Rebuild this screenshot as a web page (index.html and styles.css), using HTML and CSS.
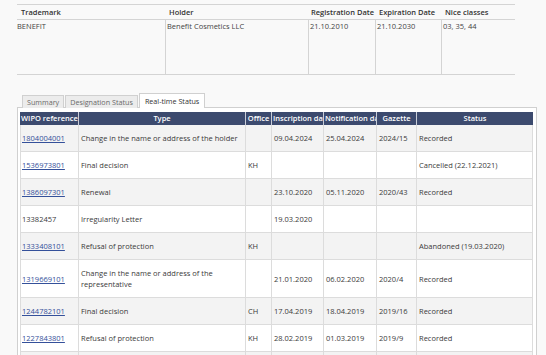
FILE: index.html
```html
<!DOCTYPE html>
<html>
<head>
<meta charset="utf-8">
<link rel="stylesheet" href="styles.css">
</head>
<body>
<table class="info">
  <colgroup><col class="c1"><col class="c2"><col class="c3"><col class="c4"><col class="c5"></colgroup>
  <thead>
    <tr><th>Trademark</th><th>Holder</th><th>Registration Date</th><th>Expiration Date</th><th>Nice classes</th></tr>
  </thead>
  <tbody>
    <tr><td>BENEFIT</td><td>Benefit Cosmetics LLC</td><td>21.10.2010</td><td>21.10.2030</td><td>03, 35, 44</td></tr>
  </tbody>
</table>

<div class="tabs">
  <div class="tab">Summary</div>
  <div class="tab">Designation Status</div>
  <div class="tab active">Real-time Status</div>
</div>
<div class="panel">
  <table class="status">
    <colgroup>
      <col class="w1"><col class="w2"><col class="w3"><col class="w4"><col class="w5"><col class="w6"><col class="w7">
    </colgroup>
    <thead>
      <tr><th>WIPO reference</th><th>Type</th><th>Office</th><th>Inscription date</th><th>Notification date</th><th>Gazette</th><th>Status</th></tr>
    </thead>
    <tbody>
      <tr class="odd"><td><a href="#">1804004001</a></td><td>Change in the name or address of the holder</td><td></td><td>09.04.2024</td><td>25.04.2024</td><td>2024/15</td><td>Recorded</td></tr>
      <tr><td><a href="#">1536973801</a></td><td>Final decision</td><td>KH</td><td></td><td></td><td></td><td>Cancelled (22.12.2021)</td></tr>
      <tr class="odd"><td><a href="#">1386097301</a></td><td>Renewal</td><td></td><td>23.10.2020</td><td>05.11.2020</td><td>2020/43</td><td>Recorded</td></tr>
      <tr><td>13382457</td><td>Irregularity Letter</td><td></td><td>19.03.2020</td><td></td><td></td><td></td></tr>
      <tr class="odd"><td><a href="#">1333408101</a></td><td>Refusal of protection</td><td>KH</td><td></td><td></td><td></td><td>Abandoned (19.03.2020)</td></tr>
      <tr><td><a href="#">1319669101</a></td><td>Change in the name or address of the representative</td><td></td><td>21.01.2020</td><td>06.02.2020</td><td>2020/4</td><td>Recorded</td></tr>
      <tr class="odd"><td><a href="#">1244782101</a></td><td>Final decision</td><td>CH</td><td>17.04.2019</td><td>18.04.2019</td><td>2019/16</td><td>Recorded</td></tr>
      <tr><td><a href="#">1227843801</a></td><td>Refusal of protection</td><td>KH</td><td>28.02.2019</td><td>01.03.2019</td><td>2019/9</td><td>Recorded</td></tr>
      <tr class="odd"><td><a href="#">1200000001</a></td><td>Final decision</td><td></td><td></td><td></td><td></td><td></td></tr>
    </tbody>
  </table>
</div>
</body>
</html>
```
FILE: styles.css
```css
html, body {
  margin: 0;
  padding: 0;
  background: #f9f9f9;
  font-family: "Open Sans", "Noto Sans", sans-serif;
  font-size: 7.5px;
  color: #3a3a3a;
}

.info {
  margin: 4px 0 0 17px;
  width: 498px;
  table-layout: fixed;
  border-collapse: separate;
  border-spacing: 0;
  border-top: 1px solid #d4d4d4;
}
.info .c1 { width: 148px; }
.info .c2 { width: 143px; }
.info .c3 { width: 67px; }
.info .c4 { width: 66px; }
.info .c5 { width: 74px; }
.info th {
  text-align: left;
  font-weight: 600;
  color: #333;
  height: 14px;
  padding: 0 0 0 4px;
  line-height: 11px;
  border-bottom: 1px solid #d4d4d4;
  white-space: nowrap;
  overflow: hidden;
}
.info th:nth-child(3) { padding-left: 3px; }
.info td {
  vertical-align: top;
  height: 53px;
  padding: 1px 1px 0 1px;
  line-height: 11px;
  border-bottom: 1px solid #d4d4d4;
  border-left: 1px solid #d4d4d4;
  color: #444;
}
.info td:first-child { border-left: none; padding-left: 0; }

.tabs {
  display: flex;
  align-items: flex-end;
  gap: 1px;
  margin: 18px 0 0 22px;
  position: relative;
  z-index: 1;
  font-size: 7.2px;
}
.tab {
  height: 12px;
  line-height: 12px;
  padding: 0 4px;
  border: 1px solid #d0d0d0;
  border-bottom: none;
  background: #ececec;
  color: #6a6a6a;
}
.tab.active {
  height: 14px;
  line-height: 14px;
  background: #fff;
  color: #333;
  padding: 0 5px;
}

.panel {
  margin: -1px 0 0 17px;
  width: 514px;
  border: 1px solid #d0d0d0;
  background: #fff;
  padding: 4px 2px 0 2px;
}

.status {
  width: 513px;
  table-layout: fixed;
  border-collapse: separate;
  border-spacing: 0;
}
.status .w1 { width: 58px; }
.status .w2 { width: 167px; }
.status .w3 { width: 26px; }
.status .w4 { width: 52px; }
.status .w5 { width: 53px; }
.status .w6 { width: 40px; }
.status .w7 { width: 117px; }

.status th {
  background: #3c4a6e;
  color: #fff;
  font-weight: 600;
  text-align: center;
  white-space: nowrap;
  overflow: hidden;
  height: 13px;
  padding: 0 1px;
  line-height: 13px;
  border-left: 1px solid #c8cdd8;
}
.status th:first-child { border-left: none; }

.status td {
  padding: 8px 2px 7px 2px;
  line-height: 11px;
  vertical-align: middle;
  border-bottom: 1px solid #dcdcdc;
  border-left: 1px solid #dcdcdc;
  color: #3a3a3a;
}
.status td:first-child { border-left: 1px solid #dcdcdc; padding-left: 1px; }
.status td:last-child { border-right: 1px solid #dcdcdc; }
.status tr.odd td { background: #f3f3f3; }
.status a { color: #34509a; text-decoration: underline; }
```
